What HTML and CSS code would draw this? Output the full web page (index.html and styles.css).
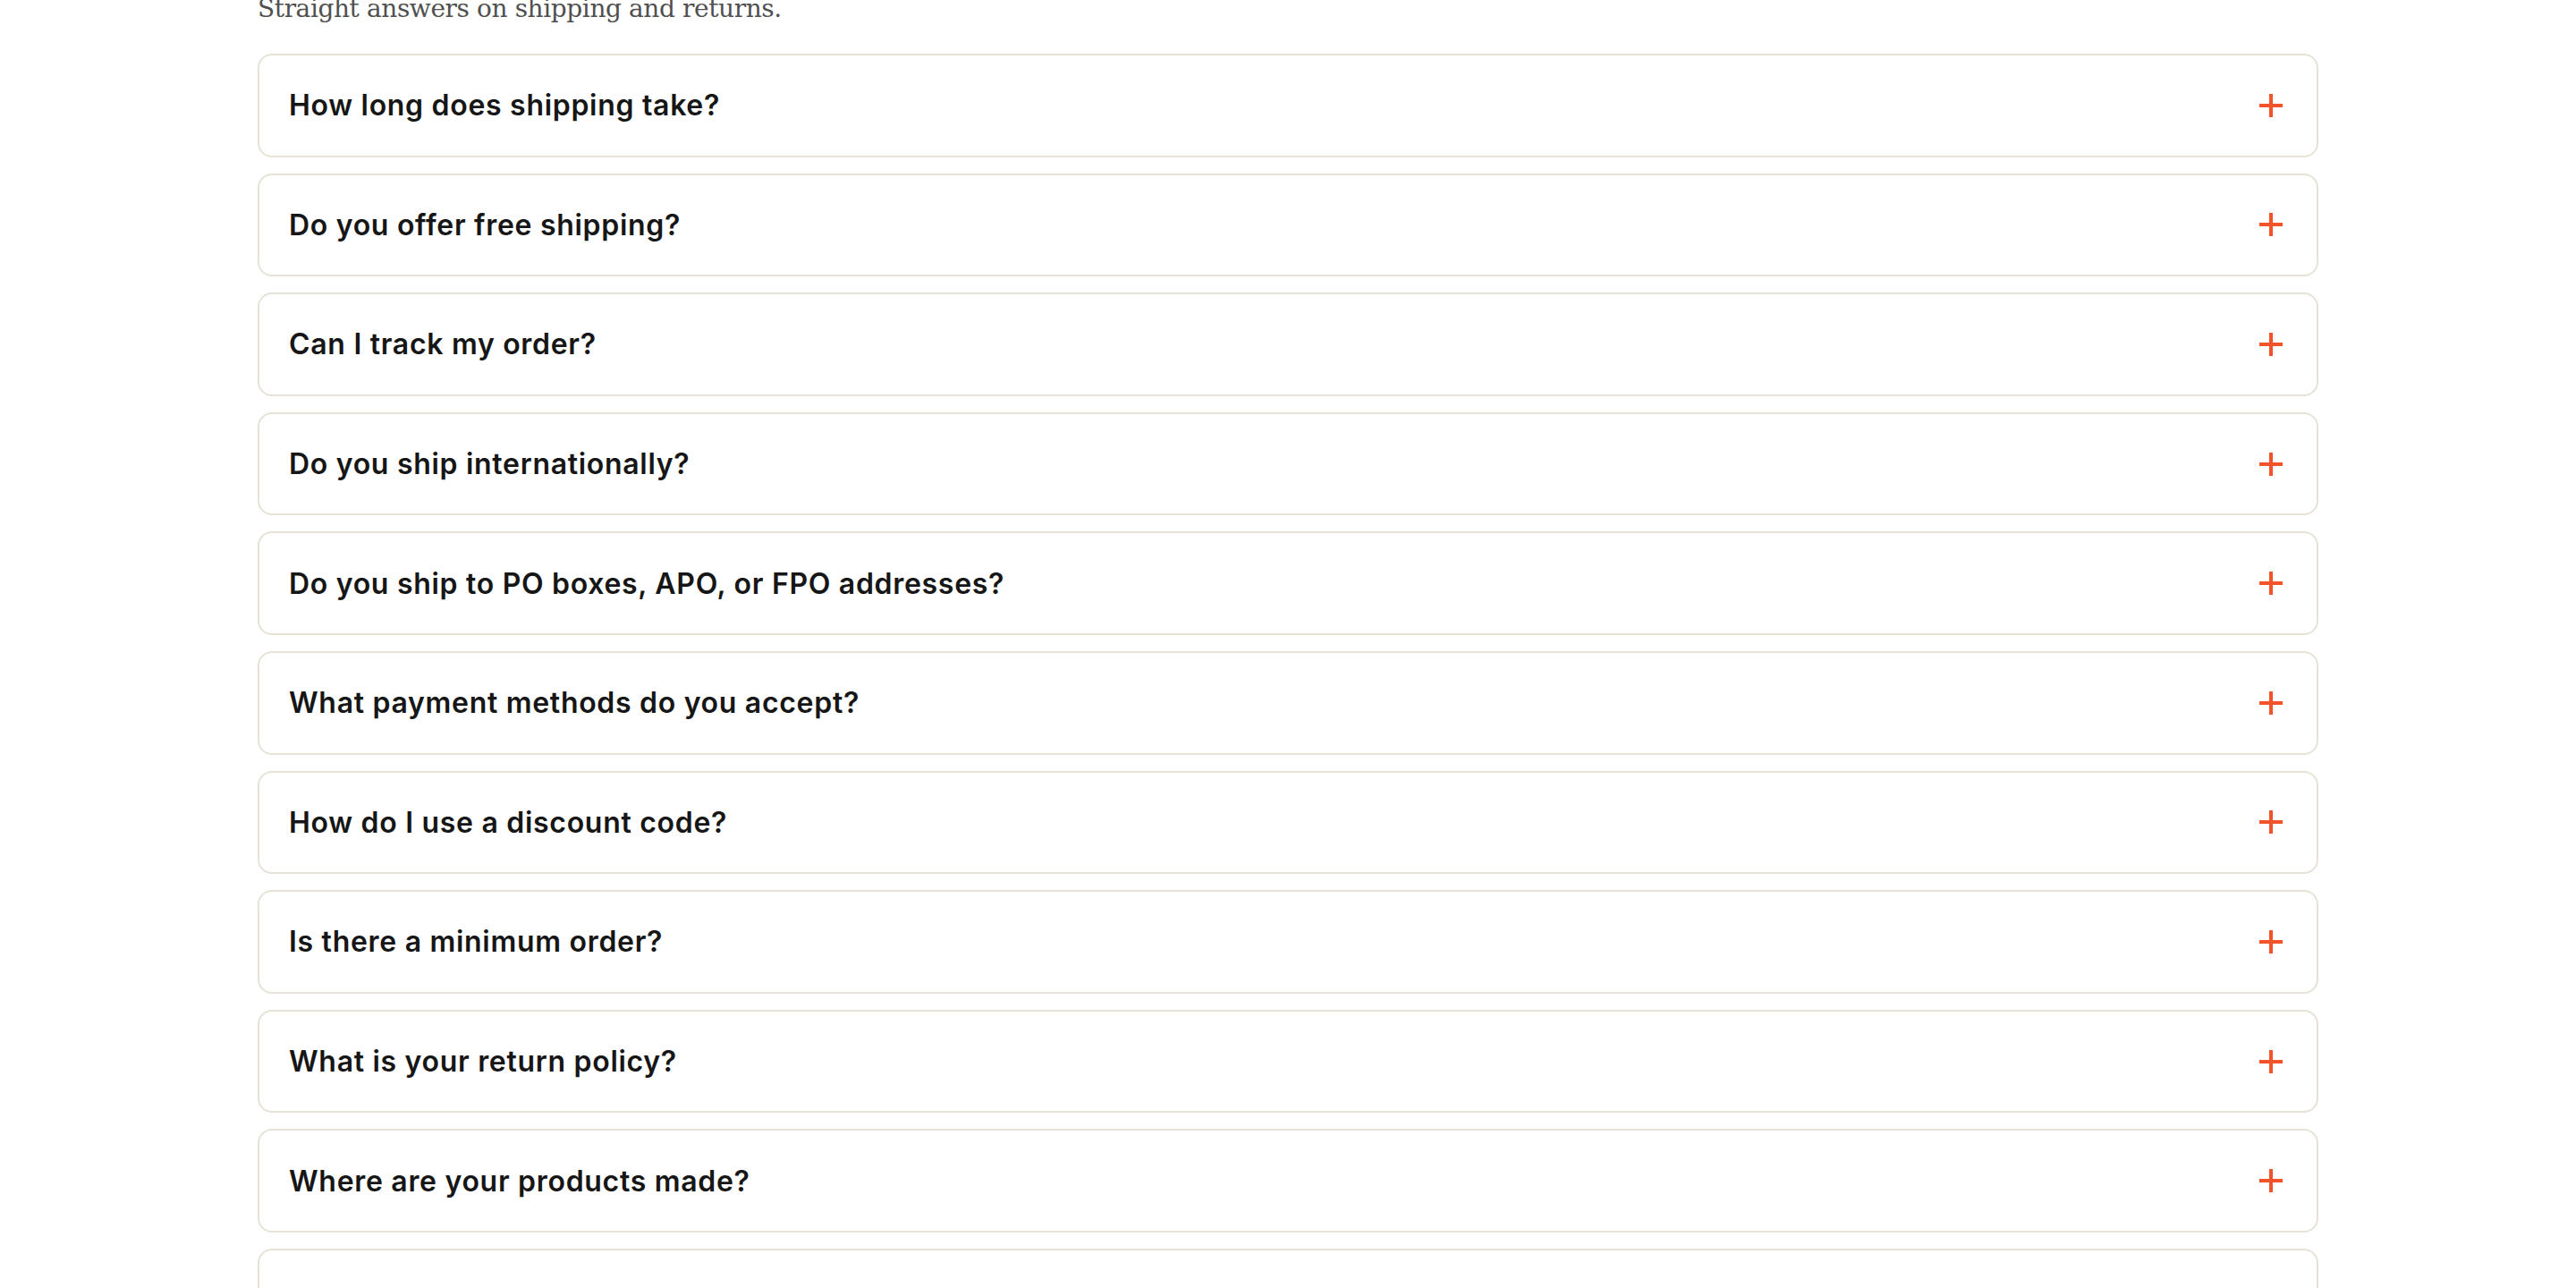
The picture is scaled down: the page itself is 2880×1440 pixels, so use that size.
FILE: index.html
```html
<!DOCTYPE html>
<html lang="en">
<head>
<meta charset="utf-8">
<title>FAQ</title>
<link rel="stylesheet" href="styles.css">
</head>
<body>
<main class="faq">
  <p class="faq-sub">Straight answers on shipping and returns.</p>
  <ul class="faq-list">
    <li class="faq-item"><span class="faq-q">How long does shipping take?</span><svg class="faq-icon" viewBox="0 0 26 26"><path d="M13 0v26M0 13h26"/></svg></li>
    <li class="faq-item"><span class="faq-q">Do you offer free shipping?</span><svg class="faq-icon" viewBox="0 0 26 26"><path d="M13 0v26M0 13h26"/></svg></li>
    <li class="faq-item"><span class="faq-q">Can I track my order?</span><svg class="faq-icon" viewBox="0 0 26 26"><path d="M13 0v26M0 13h26"/></svg></li>
    <li class="faq-item"><span class="faq-q">Do you ship internationally?</span><svg class="faq-icon" viewBox="0 0 26 26"><path d="M13 0v26M0 13h26"/></svg></li>
    <li class="faq-item"><span class="faq-q">Do you ship to PO boxes, APO, or FPO addresses?</span><svg class="faq-icon" viewBox="0 0 26 26"><path d="M13 0v26M0 13h26"/></svg></li>
    <li class="faq-item"><span class="faq-q">What payment methods do you accept?</span><svg class="faq-icon" viewBox="0 0 26 26"><path d="M13 0v26M0 13h26"/></svg></li>
    <li class="faq-item"><span class="faq-q">How do I use a discount code?</span><svg class="faq-icon" viewBox="0 0 26 26"><path d="M13 0v26M0 13h26"/></svg></li>
    <li class="faq-item"><span class="faq-q">Is there a minimum order?</span><svg class="faq-icon" viewBox="0 0 26 26"><path d="M13 0v26M0 13h26"/></svg></li>
    <li class="faq-item"><span class="faq-q">What is your return policy?</span><svg class="faq-icon" viewBox="0 0 26 26"><path d="M13 0v26M0 13h26"/></svg></li>
    <li class="faq-item"><span class="faq-q">Where are your products made?</span><svg class="faq-icon" viewBox="0 0 26 26"><path d="M13 0v26M0 13h26"/></svg></li>
    <li class="faq-item"><span class="faq-q">Do you offer gift cards?</span><svg class="faq-icon" viewBox="0 0 26 26"><path d="M13 0v26M0 13h26"/></svg></li>
  </ul>
</main>
</body>
</html>
```

FILE: styles.css
```css
html, body {
  margin: 0;
  padding: 0;
  background: #ffffff;
  overflow: hidden;
  height: 1440px;
}

.faq {
  width: 2304px;
  margin: 0 auto;
}

.faq-sub {
  margin: -10px 0 0;
  font-family: "DejaVu Serif", "Liberation Serif", serif;
  font-size: 28px;
  line-height: 40px;
  color: #505050;
  letter-spacing: -0.4px;
}

.faq-list {
  list-style: none;
  margin: 30px 0 0;
  padding: 0;
  display: flex;
  flex-direction: column;
  gap: 18px;
}

.faq-item {
  box-sizing: border-box;
  height: 115.6px;
  border: 2px solid #e6e2d8;
  border-radius: 16px;
  padding: 0 38px 0 33px;
  display: flex;
  align-items: center;
  justify-content: space-between;
}

.faq-q {
  font-family: Inter, "Noto Sans", sans-serif;
  font-weight: 600;
  font-size: 32px;
  color: #161616;
  letter-spacing: 0.7px;
}

.faq-icon {
  width: 26px;
  height: 26px;
  flex: none;
  stroke: #f2532b;
  stroke-width: 4;
  fill: none;
}
```
